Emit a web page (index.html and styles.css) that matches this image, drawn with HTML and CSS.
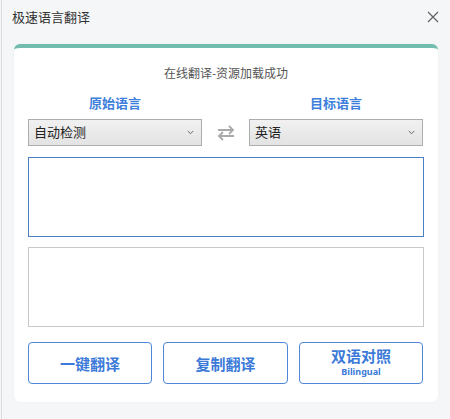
FILE: index.html
```html
<!DOCTYPE html>
<html lang="zh-CN">
<head>
    <meta charset="UTF-8">
    <meta name="viewport" content="width=device-width, initial-scale=1.0">
    <title>极速语言翻译</title>
    <link rel="stylesheet" href="styles.css">
</head>
<body>

<div class="window">
    <!-- 标题栏 -->
    <div class="titlebar">
        <span class="title">极速语言翻译</span>
        <svg class="close" width="12" height="12" viewBox="0 0 12 12">
            <path d="M1 1 L11 11 M11 1 L1 11" stroke="#5f6368" stroke-width="1.2" fill="none"/>
        </svg>
    </div>

    <div class="card">
        <div class="status">在线翻译-资源加载成功</div>

        <div class="lang-row">
            <div class="lang-col">
                <div class="lang-label">原始语言</div>
                <div class="select-wrap">
                    <select class="lang-select">
                        <option>自动检测</option>
                    </select>
                    <svg class="arrow" width="7" height="5" viewBox="0 0 7 5">
                        <path d="M0.8 1 L3.5 3.7 L6.2 1" stroke="#666" stroke-width="1" fill="none"/>
                    </svg>
                </div>
            </div>
            <div class="swap">
                <svg width="18" height="18" viewBox="0 0 18 18">
                    <path d="M1 6 H16 M12 2 L16 6 L12 10" stroke="#a9a9a9" stroke-width="1.8" fill="none"/>
                    <path d="M17 12 H2 M6 8 L2 12 L6 16" stroke="#a9a9a9" stroke-width="1.8" fill="none"/>
                </svg>
            </div>
            <div class="lang-col">
                <div class="lang-label">目标语言</div>
                <div class="select-wrap">
                    <select class="lang-select">
                        <option>英语</option>
                    </select>
                    <svg class="arrow" width="7" height="5" viewBox="0 0 7 5">
                        <path d="M0.8 1 L3.5 3.7 L6.2 1" stroke="#666" stroke-width="1" fill="none"/>
                    </svg>
                </div>
            </div>
        </div>

        <textarea class="text-box text-in"></textarea>
        <textarea class="text-box text-out" readonly></textarea>

        <div class="actions">
            <button class="act-button">一键翻译</button>
            <button class="act-button">复制翻译</button>
            <button class="act-button two-line"><span class="main">双语对照</span><span class="sub">Bilingual</span></button>
        </div>
    </div>
</div>

</body>
</html>
```

FILE: styles.css
```css
body {
    margin: 0;
    padding: 0;
    background-color: #f5f6f8;
    font-family: "Noto Sans CJK SC", "Noto Sans", sans-serif;
    color: #333;
    overflow: hidden;
}

.window {
    height: 419px;
    border-left: 1px solid #d9dbde;
    margin-left: 1px;
    box-sizing: border-box;
}

.titlebar {
    height: 32px;
    display: flex;
    align-items: center;
    justify-content: space-between;
    padding: 0 11px 0 10px;
}

.title {
    font-size: 13px;
    color: #333;
}

.close {
    margin-top: 1px;
}

.card {
    margin: 12px 12px 0 12px;
    padding: 0 14px 18px;
    background-color: #fff;
    border-radius: 6px;
    border-top: 4px solid #72bdae;
    box-shadow: 0 0 3px rgba(0, 0, 0, 0.04);
}

.status {
    margin-top: 16px;
    line-height: 18px;
    font-size: 12px;
    color: #555;
    text-align: center;
}

.lang-row {
    display: grid;
    grid-template-columns: 174px 47px 174px;
    margin-top: 12px;
}

.lang-label {
    line-height: 18px;
    font-size: 13px;
    font-weight: bold;
    color: #3d7fdb;
    text-align: center;
    margin-bottom: 6px;
}

.select-wrap {
    position: relative;
}

.lang-select {
    appearance: none;
    -webkit-appearance: none;
    width: 100%;
    height: 27px;
    margin: 0;
    padding: 0 0 2px 5px;
    border: 1px solid #adadad;
    border-radius: 0;
    background: linear-gradient(#f1f1f1, #e3e3e3);
    font-family: "Noto Sans CJK SC", sans-serif;
    font-size: 13px;
    color: #222;
    outline: none;
}

.arrow {
    position: absolute;
    right: 8px;
    top: 12px;
    pointer-events: none;
}

.swap {
    display: flex;
    justify-content: center;
    align-items: flex-end;
    padding-bottom: 4px;
}

.text-box {
    display: block;
    width: 100%;
    height: 80px;
    box-sizing: border-box;
    resize: none;
    outline: none;
    font-family: "Noto Sans CJK SC", sans-serif;
    font-size: 13px;
    background-color: #fff;
}

.text-in {
    margin-top: 11px;
    border: 1px solid #4a7fc5;
}

.text-out {
    margin-top: 10px;
    border: 1px solid #c9c9c9;
}

.actions {
    display: grid;
    grid-template-columns: 124px 125px 124px;
    gap: 11px;
    margin-top: 15px;
}

.act-button {
    height: 42px;
    background-color: #fff;
    border: 1px solid #4f86d6;
    border-radius: 4px;
    font-family: "Noto Sans CJK SC", sans-serif;
    font-size: 15px;
    font-weight: bold;
    color: #3b7ad8;
    cursor: pointer;
    padding: 0;
}

.two-line {
    display: flex;
    flex-direction: column;
    align-items: center;
    justify-content: center;
}

.two-line .main {
    line-height: 18px;
    margin-top: -2px;
}

.sub {
    font-family: "Noto Sans", sans-serif;
    font-size: 9px;
    line-height: 11px;
    margin-top: 1px;
}
```
